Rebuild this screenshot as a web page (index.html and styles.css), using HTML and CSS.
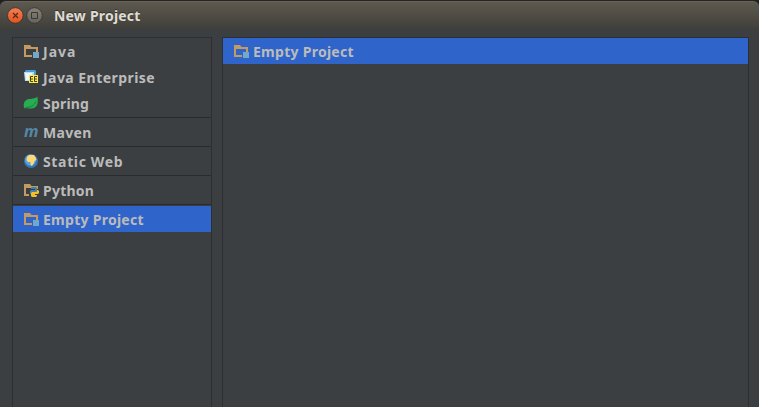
FILE: index.html
```html
<!DOCTYPE html>
<html lang="en">
<head>
<meta charset="utf-8">
<title>New Project</title>
<link rel="stylesheet" href="styles.css">
</head>
<body>
<svg class="defs" width="0" height="0" aria-hidden="true">
  <symbol id="folder" viewBox="0 0 16 16">
    <path fill="#c39a62" fill-rule="evenodd" d="M1 2h6l1.500 2H15v5h-2V6H3v6h6v2H1z"/>
    <path fill="#70a9c9" d="M10 9h6v6h-6z"/>
  </symbol>
</svg>
<div class="window">
  <header class="titlebar">
    <svg class="controls" width="36" height="18" viewBox="0 0 36 18">
      <defs>
        <linearGradient id="close" x2="0" y2="1"><stop stop-color="#f58054"/><stop offset="1" stop-color="#e2521f"/></linearGradient>
        <linearGradient id="max" x2="0" y2="1"><stop stop-color="#85827a"/><stop offset="1" stop-color="#66635b"/></linearGradient>
      </defs>
      <circle cx="8.300" cy="8.500" r="7.800" fill="url(#close)" stroke="#35332e" stroke-width=".8"/>
      <path d="M6 6l5 5M11 6l-5 5" stroke="#552817" stroke-width="1.200"/>
      <circle cx="27.500" cy="8.500" r="7.800" fill="url(#max)" stroke="#35332e" stroke-width=".8"/>
      <path d="M24.500 5.500h6v6h-6z" fill="none" stroke="#393732"/>
    </svg>
    <h1 class="title">New Project</h1>
  </header>
  <main class="content">
    <nav class="panel sidebar">
      <ul class="group">
        <li class="row"><svg class="icon"><use href="#folder"/></svg><span class="label java">Java</span></li>
        <li class="row">
          <svg class="icon" viewBox="0 0 16 16">
            <path fill="#b9dcf5" d="M1 3h10v9H2z"/><path fill="#4c9bd8" d="M3 1h9l1 1v4h-2V3H2V2z"/><path fill="#eef7fd" d="M2 4h7v7H3z"/>
            <path fill="#ffe94a" d="M6 6h9v8H6z"/><path d="M10 7.500H7.500v5H10M7.500 10H10M14 7.500h-2.500v5H14M11.500 10H14" fill="none" stroke="#454018"/>
          </svg><span class="label enterprise">Java Enterprise</span></li>
        <li class="row">
          <svg class="icon" viewBox="0 0 16 16">
            <path fill="#27ae50" d="M14.300 1.500C15.500 7 15 12.500 9 13.500c-2 .3-4 0-5.500-.5L2 13.500 1 12.500C0 8 2 4.500 6 4c4-.4 7-.5 8.300-2.500z"/><path d="M2.500 12.500c5 0 9-2 10.500-6" fill="none" stroke="#168039"/>
          </svg><span class="label spring">Spring</span></li>
      </ul>
      <ul class="group">
        <li class="row">
          <span class="icon maven-mark">m</span><span class="label maven">Maven</span></li>
      </ul>
      <ul class="group">
        <li class="row">
          <svg class="icon" viewBox="0 0 16 16">
            <circle cx="8" cy="8" r="7" fill="#2f78bd"/><circle cx="7.500" cy="7" r="5.500" fill="#5ba4df"/>
            <path fill="#ffd873" d="M4 4l2-2h5l2 3 .5 2-2 1-.5 2-2 3-1.500-1V9H5L3.500 7z"/>
          </svg><span class="label static">Static Web</span></li>
      </ul>
      <ul class="group">
        <li class="row">
          <svg class="icon" viewBox="0 0 16 16">
            <path fill="#c39a62" d="M1 2h6l1.500 2H15v3h-1V6H3v6h3v2H1z"/>
            <path fill="#4380ac" d="M9 5h4l1 1v3l-1 1H9v2H7V9l1-1h4V7H8V6z"/><path fill="#f4bf28" d="M14 8h1l1 1v2l-1 1h-3v1h2v1l-1 1H9l-1-1v-3l1-1h4l1-1z"/>
          </svg><span class="label python">Python</span></li>
      </ul>
      <ul class="group">
        <li class="row selected"><svg class="icon"><use href="#folder"/></svg><span class="label empty">Empty Project</span></li>
      </ul>
    </nav>
    <section class="panel">
      <ul class="group">
        <li class="row selected"><svg class="icon"><use href="#folder"/></svg><span class="label empty">Empty Project</span></li>
      </ul>
    </section>
  </main>
</div>
</body>
</html>
```
FILE: styles.css
```css
* { box-sizing: border-box; }
body { margin: 0; background: #202020; font: 700 14px/26px "Noto Sans", "Open Sans", sans-serif; color: #bbbbbb; }
.defs { display: block; height: 0; }
.window { height: 407px; display: flex; flex-direction: column; overflow: hidden; background: #3c3f41; border-top: 1px solid #242424; border-radius: 6px 6px 0 0; }
.titlebar { flex: none; height: 28px; display: flex; align-items: center; padding: 1px 0 0 7px; background: linear-gradient(#5d594f, #403f3a); border-top: 1px solid #69655b; border-radius: 6px 6px 0 0; }
.controls { flex: none; }
.title { margin: 0 0 0 11px; font-size: 14px; font-weight: 700; line-height: 26px; color: #dfdbd2; letter-spacing: 0.2px; text-shadow: 0 -1px #33322e; white-space: nowrap; }
.content { flex: 1; display: grid; grid-template-columns: 200px 1fr; gap: 10px; padding: 8px 10px 0 12px; }
.panel { border: 1px solid #2e2f30; border-bottom: 0; }
.group { margin: 0; padding: 0; list-style: none; }
.group + .group { padding-top: 3px; background: linear-gradient(#2b2b2b, #2b2b2b) 0 1px / 100% 1px no-repeat; }
.row { display: flex; align-items: center; height: 26px; padding-left: 10px; gap: 4px; white-space: nowrap; }
.selected { background: #2f65ca; }
.icon { width: 16px; height: 16px; flex: none; }
.label { padding-top: 2px; }
.java { letter-spacing: 1px; }
.enterprise { letter-spacing: 0.45px; }
.spring { letter-spacing: 0.2px; }
.maven { letter-spacing: 0.3px; }
.static { letter-spacing: 0.65px; }
.python { letter-spacing: 0.25px; }
.empty { letter-spacing: 0.27px; }
.maven-mark { padding-left: 1px; font: italic 700 16px/14px "Open Sans", sans-serif; color: #5488a5; }
```
